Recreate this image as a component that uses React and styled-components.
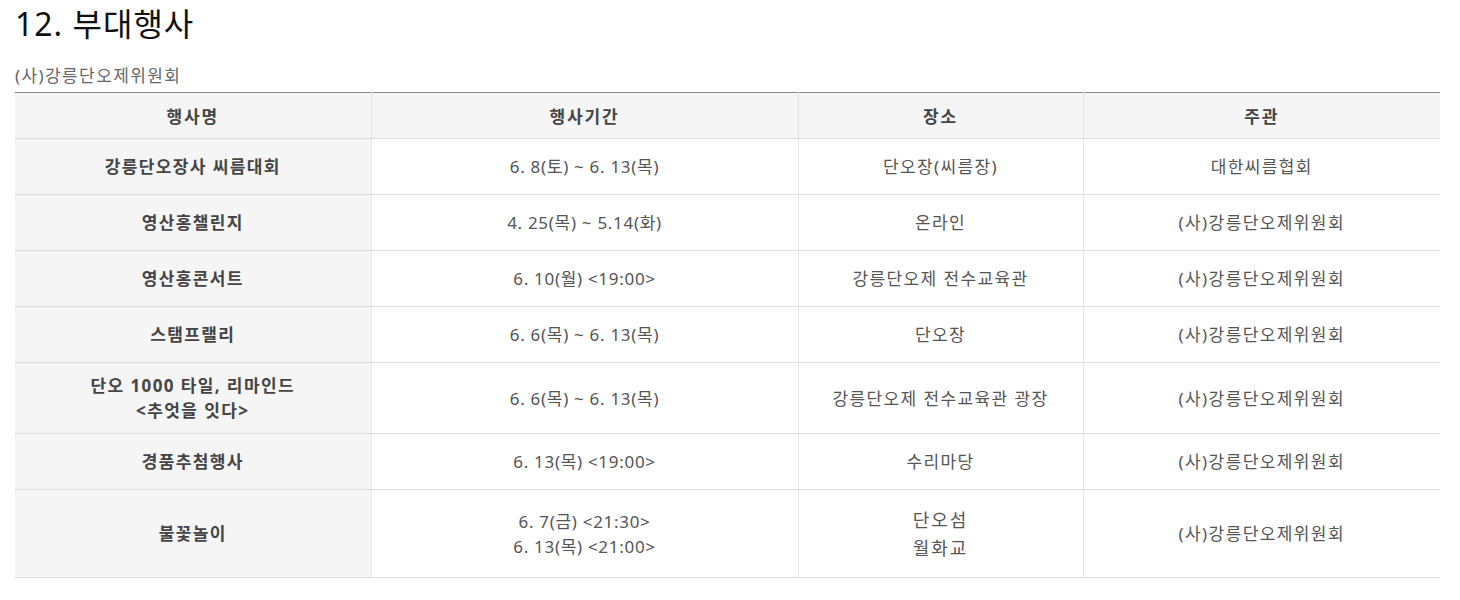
import React from 'react';
import styled, { createGlobalStyle } from 'styled-components';

const GlobalStyle = createGlobalStyle`
  body {
    margin: 0;
    background: #fff;
    font-family: "Noto Sans", "Noto Sans CJK KR", sans-serif;
  }
`

const Page = styled.div`
  padding: 0 20px 0 15px;
`

const Title = styled.h2`
  margin: 0;
  padding-top: 3px;
  font-size: 32px;
  font-weight: 400;
  line-height: 42px;
  letter-spacing: 1px;
  color: #111;
`

const Organizer = styled.p`
  margin: 19px 0 0;
  font-size: 17px;
  line-height: 24px;
  letter-spacing: 1.4px;
  color: #666;
`

const Table = styled.table`
  width: 100%;
  margin-top: 4px;
  border-collapse: collapse;
  border-top: 1px solid #8a8a8a;
  table-layout: fixed;
`

const Th = styled.th`
  height: 45px;
  padding: 0 10px;
  background: #f5f5f5;
  border-bottom: 1px solid #dcdcdc;
  border-left: 1px solid #e3e3e3;
  font-size: 17px;
  font-weight: 700;
  letter-spacing: 1.8px;
  color: #444;
  &:first-child { border-left: 0; }
`

const Td = styled.td`
  height: ${p => p.$h}px;
  padding: 0 10px;
  text-align: center;
  vertical-align: middle;
  border-bottom: 1px solid #dcdcdc;
  border-left: 1px solid #e8e8e8;
  font-size: 17px;
  line-height: 25px;
  letter-spacing: 1.4px;
  color: #555;
  &:first-child { border-left: 0; }
`

const NameCell = styled(Td)`
  background: #f5f5f5;
  font-weight: 700;
  color: #444;
`

const DateCell = styled(Td)`
  letter-spacing: 0.7px;
`

const BigPlace = styled.span`
  font-size: 18px;
  line-height: 28px;
  letter-spacing: 2px;
`

const rows = [
  { name: '강릉단오장사 씨름대회', date: ['6. 8(토) ~ 6. 13(목)'], place: '단오장(씨름장)', host: '대한씨름협회', h: 55 },
  { name: '영산홍챌린지', date: ['4. 25(목) ~ 5.14(화)'], place: '온라인', host: '(사)강릉단오제위원회', h: 55 },
  { name: '영산홍콘서트', date: ['6. 10(월) <19:00>'], place: '강릉단오제 전수교육관', host: '(사)강릉단오제위원회', h: 55 },
  { name: '스탬프랠리', date: ['6. 6(목) ~ 6. 13(목)'], place: '단오장', host: '(사)강릉단오제위원회', h: 55 },
  { name: ['단오 1000 타일, 리마인드', '<추엇을 잇다>'], date: ['6. 6(목) ~ 6. 13(목)'], place: '강릉단오제 전수교육관 광장', host: '(사)강릉단오제위원회', h: 70 },
  { name: '경품추첨행사', date: ['6. 13(목) <19:00>'], place: '수리마당', host: '(사)강릉단오제위원회', h: 55 },
  { name: '불꽃놀이', date: ['6. 7(금) <21:30>', '6. 13(목) <21:00>'], place: ['단오섬', '월화교'], host: '(사)강릉단오제위원회', h: 87 },
];

const lines = (v) => (Array.isArray(v) ? v : [v]).map((t, i) => (
  <React.Fragment key={i}>{i > 0 && <br />}{t}</React.Fragment>
));

class App extends React.PureComponent {
  render() {
    return (
      <Page>
        <GlobalStyle />
        <Title>12. 부대행사</Title>
        <Organizer>(사)강릉단오제위원회</Organizer>
        <Table>
          <colgroup>
            <col style={{ width: 356 }} />
            <col style={{ width: 427 }} />
            <col style={{ width: 285 }} />
            <col />
          </colgroup>
          <thead>
            <tr>
              <Th>행사명</Th>
              <Th>행사기간</Th>
              <Th>장소</Th>
              <Th>주관</Th>
            </tr>
          </thead>
          <tbody>
            {rows.map((r, i) => (
              <tr key={i}>
                <NameCell $h={r.h}>{lines(r.name)}</NameCell>
                <DateCell $h={r.h}>{lines(r.date)}</DateCell>
                <Td $h={r.h}>
                  {Array.isArray(r.place) ? <BigPlace>{lines(r.place)}</BigPlace> : r.place}
                </Td>
                <Td $h={r.h}>{r.host}</Td>
              </tr>
            ))}
          </tbody>
        </Table>
      </Page>
    );
  }
};

export default App;
